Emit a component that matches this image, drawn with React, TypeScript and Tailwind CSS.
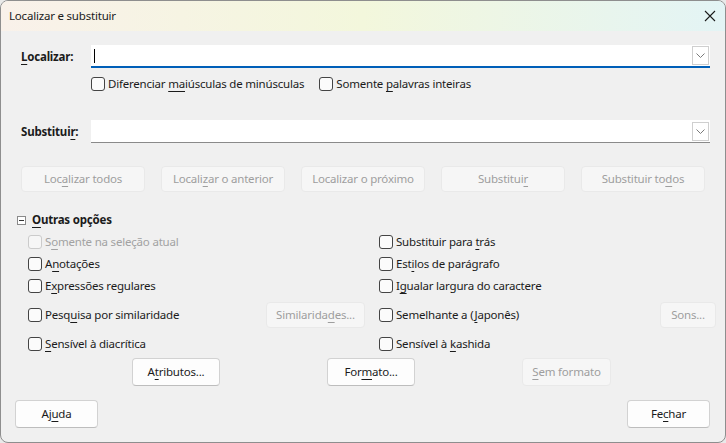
import React from 'react';

const U: React.FC<{ children: React.ReactNode }> = ({ children }) => (
  <span className="underline decoration-1 underline-offset-[3px]">{children}</span>
);

const Check: React.FC<{ children: React.ReactNode; disabled?: boolean }> = ({ children, disabled }) => (
  <div className={`flex items-center gap-[3px] ${disabled ? 'text-[#a2a2a2]' : 'text-[#1b1b1b]'}`}>
    <span
      className={`w-[14px] h-[14px] rounded-[3px] border ${
        disabled ? 'border-[#cbcbcb] bg-[#f6f6f6]' : 'border-[#444] bg-[#fbfbfb]'
      }`}
    />
    <span>{children}</span>
  </div>
);

const Btn: React.FC<{ children: React.ReactNode; disabled?: boolean; className?: string }> = ({
  children,
  disabled,
  className = '',
}) => (
  <div
    className={`flex items-center justify-center rounded-[4px] border ${
      disabled
        ? 'bg-[#f6f6f6] border-[#e9e9e9] text-[#9e9e9e]'
        : 'bg-[#fdfdfd] border-[#d2d2d2] border-b-[#bdbdbd] text-[#1b1b1b]'
    } ${className}`}
  >
    {children}
  </div>
);

const Chevron = () => (
  <svg width="9" height="5" viewBox="0 0 9 5" fill="none">
    <path d="M0.5 0.5 L4.5 4.5 L8.5 0.5" stroke="#7a7a7a" strokeWidth="1" />
  </svg>
);

export default function App() {
  return (
    <div
      className="w-[726px] h-[443px] bg-[#e9e9e9] text-[11.5px] tracking-[-0.2px] leading-none"
      style={{ fontFamily: '"Noto Sans", "Open Sans", sans-serif' }}
    >
      <div className="h-full rounded-[8px] border border-[#8e8e8e] overflow-hidden bg-[#f0f0f0] flex flex-col">
        {/* Title bar */}
        <div className="h-[30px] shrink-0 flex items-center justify-between pl-[8px] pr-[8px] bg-linear-to-r from-[#f9f1ea] via-[#f3f7dc] to-[#e3f4f5] text-[#1b1b1b]">
          <span>Localizar e substituir</span>
          <svg width="12" height="12" viewBox="0 0 12 12" className="mr-[1px]">
            <path d="M1 1 L11 11 M11 1 L1 11" stroke="#1b1b1b" strokeWidth="1.1" />
          </svg>
        </div>

        {/* Localizar */}
        <div className="flex items-center mt-[14px] pl-[20px] pr-[15px] h-[23px]">
          <div className="w-[70px] font-bold text-[#1b1b1b] pt-[1px]">
            <U>L</U>ocalizar:
          </div>
          <div className="flex-1 h-[23px] bg-white border-b-2 border-[#005fb8] flex items-center">
            <span className="ml-[3px] w-px h-[14px] bg-black" />
            <div className="ml-auto mr-[1px] w-[17px] h-[19px] border border-[#cfcfcf] bg-white flex items-center justify-center">
              <Chevron />
            </div>
          </div>
        </div>

        <div className="flex items-center gap-[15px] mt-[7px] pl-[90px] h-[18px]">
          <Check>
            Diferenciar <U>ma</U>iúsculas de minúsculas
          </Check>
          <Check>
            Somente <U>p</U>alavras inteiras
          </Check>
        </div>

        {/* Substituir */}
        <div className="flex items-center mt-[27px] pl-[20px] pr-[15px] h-[23px]">
          <div className="w-[70px] font-bold text-[#1b1b1b] pt-[1px]">
            Substitui<U>r</U>:
          </div>
          <div className="flex-1 h-[23px] bg-white border-b border-[#8a8a8a] flex items-center">
            <div className="ml-auto mr-[1px] w-[17px] h-[19px] border border-[#cfcfcf] bg-white flex items-center justify-center">
              <Chevron />
            </div>
          </div>
        </div>

        {/* Action buttons */}
        <div className="flex items-center gap-[16px] mt-[23px] pl-[20px] h-[26px]">
          <Btn disabled className="w-[124px] h-[26px]">
            Loc<U>a</U>lizar todos
          </Btn>
          <Btn disabled className="w-[124px] h-[26px]">
            Locali<U>z</U>ar o anterior
          </Btn>
          <Btn disabled className="w-[124px] h-[26px]">
            Localizar o próximo
          </Btn>
          <Btn disabled className="w-[124px] h-[26px]">
            Substitui<U>r</U>
          </Btn>
          <Btn disabled className="w-[124px] h-[26px]">
            Substituir to<U>d</U>os
          </Btn>
        </div>

        {/* Outras opções */}
        <div className="flex items-center gap-[6px] mt-[21px] pl-[16px] h-[14px]">
          <span className="w-[9px] h-[9px] border border-[#8a8a8a] bg-white flex items-center justify-center">
            <span className="w-[5px] h-px bg-[#333]" />
          </span>
          <span className="font-bold text-[#1b1b1b]">
            <U>O</U>utras opções
          </span>
        </div>

        <div className="grid grid-cols-[351px_1fr] mt-[4px] pl-[27px]">
          <div className="h-[22px] flex items-center">
            <Check disabled>
              S<U>o</U>mente na seleção atual
            </Check>
          </div>
          <div className="h-[22px] flex items-center">
            <Check>
              Substituir para <U>t</U>rás
            </Check>
          </div>
          <div className="h-[22px] flex items-center">
            <Check>
              A<U>n</U>otações
            </Check>
          </div>
          <div className="h-[22px] flex items-center">
            <Check>
              Est<U>i</U>los de parágrafo
            </Check>
          </div>
          <div className="h-[22px] flex items-center">
            <Check>
              E<U>x</U>pressões regulares
            </Check>
          </div>
          <div className="h-[22px] flex items-center">
            <Check>
              I<U>g</U>ualar largura do caractere
            </Check>
          </div>
          <div className="h-[26px] mt-[5px] w-[337px] flex items-center justify-between">
            <Check>
              Pesq<U>u</U>isa por similaridade
            </Check>
            <Btn disabled className="w-[99px] h-[26px]">
              Similarida<U>d</U>es...
            </Btn>
          </div>
          <div className="h-[26px] mt-[5px] w-[337px] flex items-center justify-between">
            <Check>
              Semelhante a (<U>J</U>aponês)
            </Check>
            <Btn disabled className="w-[56px] h-[26px]">
              Sons...
            </Btn>
          </div>
          <div className="h-[22px] mt-[5px] flex items-center">
            <Check>
              <U>S</U>ensível à diacrítica
            </Check>
          </div>
          <div className="h-[22px] mt-[5px] flex items-center">
            <Check>
              Sensível à <U>k</U>ashida
            </Check>
          </div>
        </div>

        <div className="flex items-center mt-[3px] pl-[131px] gap-[107px] h-[28px]">
          <Btn className="w-[88px] h-[28px]">
            A<U>t</U>ributos...
          </Btn>
          <Btn className="w-[88px] h-[28px]">
            For<U>m</U>ato...
          </Btn>
          <Btn disabled className="w-[89px] h-[28px]">
            <U>S</U>em formato
          </Btn>
        </div>

        <div className="flex items-center justify-between mt-[14px] pl-[14px] pr-[15px] h-[28px]">
          <Btn className="w-[83px] h-[28px]">
            Aj<U>u</U>da
          </Btn>
          <Btn className="w-[83px] h-[28px]">
            Fe<U>c</U>har
          </Btn>
        </div>
      </div>
    </div>
  );
}
